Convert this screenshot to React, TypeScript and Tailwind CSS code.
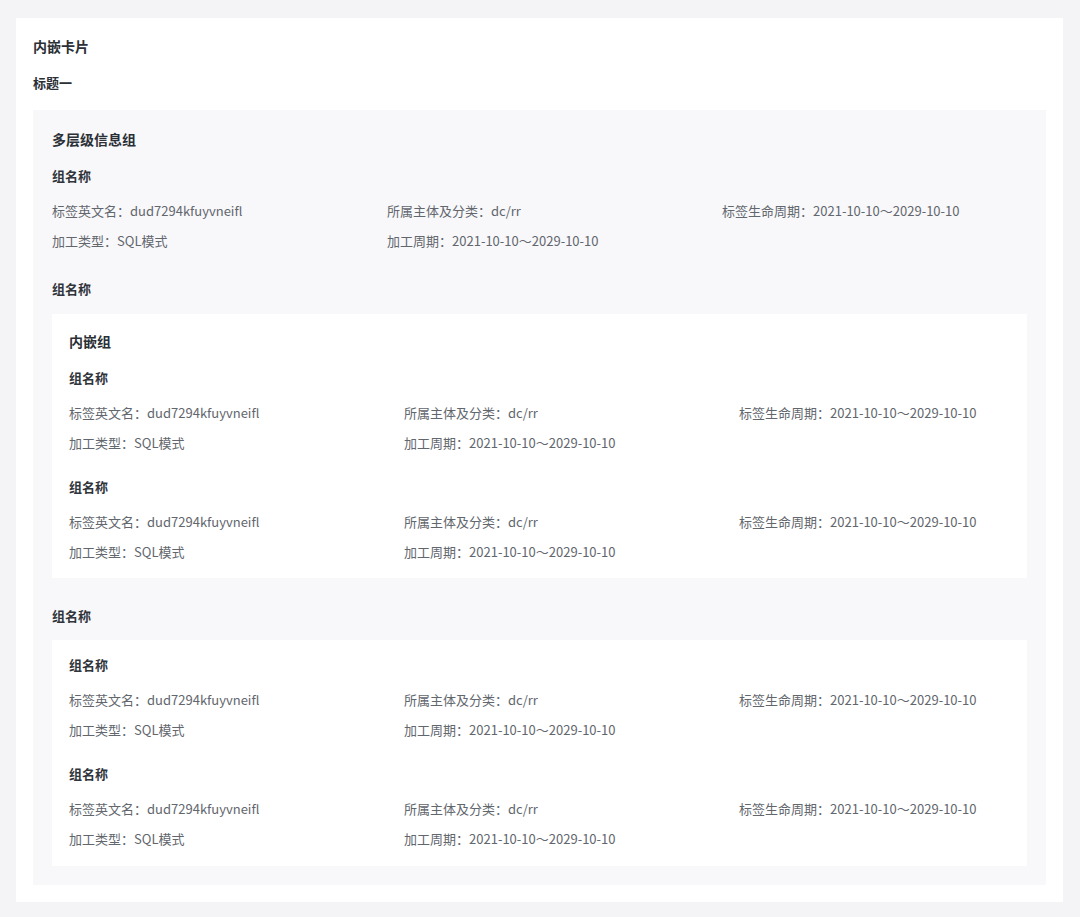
const FONT = { fontFamily: '"Noto Sans CJK SC", "Noto Sans", sans-serif' };

interface Field {
  label: string;
  value: string;
}

const fields: Field[] = [
  { label: '标签英文名', value: 'dud7294kfuyvneifl' },
  { label: '所属主体及分类', value: 'dc/rr' },
  { label: '标签生命周期', value: '2021-10-10～2029-10-10' },
  { label: '加工类型', value: 'SQL模式' },
  { label: '加工周期', value: '2021-10-10～2029-10-10' },
];

function Group({ title }: { title: string }) {
  return (
    <div>
      <h4 className="text-[13px] leading-5 font-bold text-[#30343b]">{title}</h4>
      <div className="mt-[15px] grid grid-cols-[335px_335px_1fr] gap-y-[10px]">
        {fields.map((f) => (
          <p key={f.label} className="text-[13px] leading-5 text-[#62666d] whitespace-nowrap">
            {f.label}：{f.value}
          </p>
        ))}
      </div>
    </div>
  );
}

export default function App() {
  return (
    <div className="min-h-screen bg-[#f4f4f6] px-4 pt-[18px] pb-[15px]" style={FONT}>
      <div className="w-[1047px] bg-white px-[17px] pt-[18px] pb-[17px]">
        <h2 className="text-[14px] leading-5 font-bold text-[#2b2f36]">内嵌卡片</h2>
        <h3 className="mt-[17px] text-[13px] leading-5 font-bold text-[#2b2f36]">标题一</h3>

        <div className="mt-[17px] bg-[#f8f8fa] px-[19px] pt-[19px] pb-[19px]">
          <h3 className="text-[14px] leading-5 font-bold text-[#2b2f36]">多层级信息组</h3>
          <div className="mt-[17px]">
            <Group title="组名称" />
          </div>

          <h4 className="mt-[28px] text-[13px] leading-5 font-bold text-[#30343b]">组名称</h4>
          <div className="mt-[15px] bg-white px-[17px] pt-[17px] pb-4">
            <h3 className="text-[14px] leading-5 font-bold text-[#2b2f36]">内嵌组</h3>
            <div className="mt-[17px] flex flex-col gap-6">
              <Group title="组名称" />
              <Group title="组名称" />
            </div>
          </div>

          <h4 className="mt-[28px] text-[13px] leading-5 font-bold text-[#30343b]">组名称</h4>
          <div className="mt-[14px] bg-white px-[17px] pt-[15px] pb-[17px]">
            <div className="flex flex-col gap-6">
              <Group title="组名称" />
              <Group title="组名称" />
            </div>
          </div>
        </div>
      </div>
    </div>
  );
}
